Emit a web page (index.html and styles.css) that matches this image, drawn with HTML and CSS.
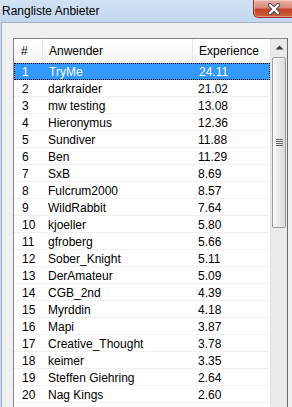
FILE: index.html
```html
<!DOCTYPE html>
<html>
<head>
<meta charset="utf-8">
<link rel="stylesheet" href="styles.css">
</head>
<body>
<div class="window">
  <div class="titlebar">
    <span class="title">Rangliste Anbieter</span>
    <div class="close">
      <svg width="20" height="12" viewBox="0 0 20 12">
        <path d="M6 2 L14 10 M14 2 L6 10" stroke="#4a4a4a" stroke-width="4.2" stroke-linecap="round" fill="none"/>
        <path d="M6 2 L14 10 M14 2 L6 10" stroke="#ffffff" stroke-width="2.4" stroke-linecap="round" fill="none"/>
      </svg>
    </div>
  </div>
  <div class="client">
    <div class="listview">
      <div class="list">
        <div class="header">
          <div class="hc c1">#</div>
          <div class="hc c2">Anwender</div>
          <div class="hc c3">Experience</div>
        </div>
        <div class="row sel"><div class="c1">1</div><div class="c2">TryMe</div><div class="c3">24.11</div></div>
        <div class="row"><div class="c1">2</div><div class="c2">darkraider</div><div class="c3">21.02</div></div>
        <div class="row"><div class="c1">3</div><div class="c2">mw testing</div><div class="c3">13.08</div></div>
        <div class="row"><div class="c1">4</div><div class="c2">Hieronymus</div><div class="c3">12.36</div></div>
        <div class="row"><div class="c1">5</div><div class="c2">Sundiver</div><div class="c3">11.88</div></div>
        <div class="row"><div class="c1">6</div><div class="c2">Ben</div><div class="c3">11.29</div></div>
        <div class="row"><div class="c1">7</div><div class="c2">SxB</div><div class="c3">8.69</div></div>
        <div class="row"><div class="c1">8</div><div class="c2">Fulcrum2000</div><div class="c3">8.57</div></div>
        <div class="row"><div class="c1">9</div><div class="c2">WildRabbit</div><div class="c3">7.64</div></div>
        <div class="row"><div class="c1">10</div><div class="c2">kjoeller</div><div class="c3">5.80</div></div>
        <div class="row"><div class="c1">11</div><div class="c2">gfroberg</div><div class="c3">5.66</div></div>
        <div class="row"><div class="c1">12</div><div class="c2">Sober_Knight</div><div class="c3">5.11</div></div>
        <div class="row"><div class="c1">13</div><div class="c2">DerAmateur</div><div class="c3">5.09</div></div>
        <div class="row"><div class="c1">14</div><div class="c2">CGB_2nd</div><div class="c3">4.39</div></div>
        <div class="row"><div class="c1">15</div><div class="c2">Myrddin</div><div class="c3">4.18</div></div>
        <div class="row"><div class="c1">16</div><div class="c2">Mapi</div><div class="c3">3.87</div></div>
        <div class="row"><div class="c1">17</div><div class="c2">Creative_Thought</div><div class="c3">3.78</div></div>
        <div class="row"><div class="c1">18</div><div class="c2">keimer</div><div class="c3">3.35</div></div>
        <div class="row"><div class="c1">19</div><div class="c2">Steffen Giehring</div><div class="c3">2.64</div></div>
        <div class="row"><div class="c1">20</div><div class="c2">Nag Kings</div><div class="c3">2.60</div></div>
      </div>
      <div class="scrollbar">
        <div class="arrow"><svg width="9" height="5" viewBox="0 0 9 5"><path d="M0.5 4.5 L4.5 0.5 L8.5 4.5 Z" fill="#3c3c3c"/></svg></div>
        <div class="track">
          <div class="thumb"><div class="grip"><i></i><i></i><i></i><i></i></div></div>
        </div>
      </div>
    </div>
  </div>
</div>
</body>
</html>
```
FILE: styles.css
```css
html, body {
  margin: 0;
  padding: 0;
  width: 292px;
  height: 407px;
  overflow: hidden;
  background: #c9dcf0;
  font-family: "Liberation Sans", Arial, sans-serif;
  font-size: 12px;
  color: #000;
}

.window {
  width: 292px;
  height: 407px;
  display: flex;
  flex-direction: column;
}

.titlebar {
  height: 22px;
  display: flex;
  align-items: flex-start;
  justify-content: space-between;
  background: linear-gradient(#d2e2f4, #c3d7ee);
}

.title {
  padding-left: 2px;
  line-height: 22px;
  color: #000;
}

.close {
  width: 42px;
  height: 18px;
  margin-right: -3px;
  box-sizing: border-box;
  border: 1px solid #8c3226;
  border-top: none;
  border-radius: 0 0 0 5px;
  background: linear-gradient(#eab1a5 0%, #d98a78 45%, #c4442c 55%, #cf5e3c 100%);
  display: flex;
  align-items: center;
  justify-content: center;
  box-shadow: inset 0 0 0 1px rgba(255,255,255,0.35);
}

.close svg {
  display: block;
}

.client {
  flex: 1;
  margin-left: 1px;
  border-top: 1px solid #9fb1c5;
  border-left: 1px solid #9fb1c5;
  background: #f0f0f0;
  padding: 15px 0 0 11px;
  overflow: hidden;
}

.listview {
  width: 275px;
  height: 400px;
  box-sizing: border-box;
  border: 1px solid #828790;
  border-right: 2px solid #6a6a6a;
  background: #fff;
  display: flex;
}

.list {
  width: 256px;
  flex: none;
}

.header {
  display: flex;
  height: 24px;
  background: linear-gradient(#ffffff, #f3f4f6);
}

.hc {
  line-height: 24px;
  box-sizing: border-box;
  border-right: 1px solid #e3e5e8;
}

.header .c1 { padding-left: 7px; }
.header .c2 { padding-left: 6px; }
.header .c3 { padding-left: 6px; border-right: none; }

.c1 { width: 29px; padding-left: 8px; box-sizing: border-box; flex: none; }
.c2 { width: 150px; padding-left: 5px; box-sizing: border-box; flex: none; white-space: nowrap; }
.c3 { flex: 1; padding-left: 5px; box-sizing: border-box; }

.row {
  display: flex;
  height: 17px;
  box-sizing: border-box;
  padding-top: 2px;
  line-height: 14px;
  border-bottom: 1px solid #f0f0f0;
}

.row.sel {
  background: #3399ff;
  color: #fff;
  border: 1px dotted #000;
  padding-top: 1px;
}

.row.sel .c1 { padding-left: 7px; }
.row.sel .c3 { padding-left: 5px; }

.scrollbar {
  width: 16px;
  flex: none;
  display: flex;
  flex-direction: column;
  background: #eaeaea;
  border-left: 1px solid #e3e3e3;
}

.arrow {
  height: 17px;
  display: flex;
  align-items: center;
  justify-content: center;
  flex: none;
}

.arrow svg { display: block; }

.track {
  flex: 1;
  padding: 1px 0 0 1px;
}

.thumb {
  width: 14px;
  height: 171px;
  box-sizing: border-box;
  border: 1px solid #9a9a9a;
  border-radius: 2px;
  background: linear-gradient(90deg, #f7f7f7 0%, #ececec 40%, #d9d9d9 100%);
  box-shadow: inset 1px 1px 0 #ffffff;
  display: flex;
  align-items: center;
  justify-content: center;
}

.grip {
  display: flex;
  flex-direction: column;
  gap: 1px;
}

.grip i {
  display: block;
  width: 7px;
  height: 1px;
  background: #5f6670;
}
```
